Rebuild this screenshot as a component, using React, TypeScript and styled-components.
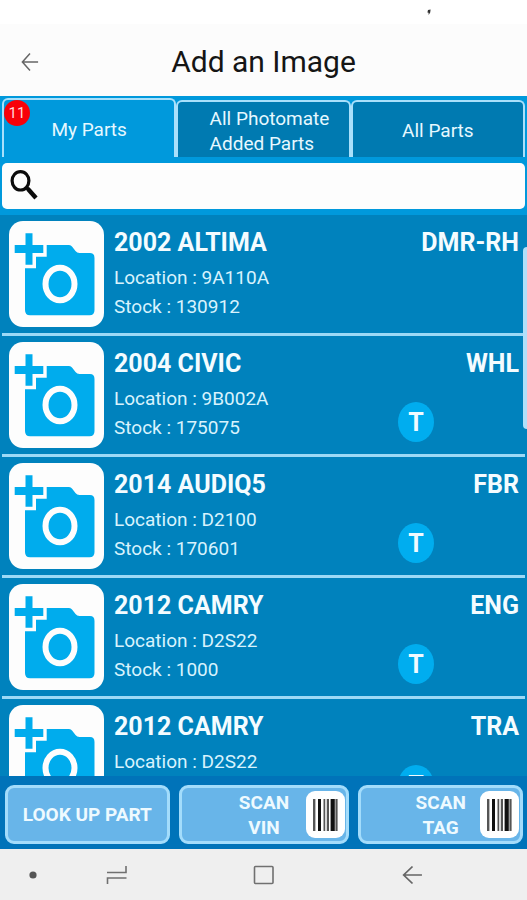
import React from "react";
import styled, { createGlobalStyle } from "styled-components";

const GlobalStyle = createGlobalStyle`
  *, *::before, *::after { box-sizing: border-box; }
  body { margin: 0; background: #fdfdfd; }
  body, button, input { font-family: Roboto, "Liberation Sans", sans-serif; }
  button { margin: 0; padding: 0; border: 0; background: none; color: inherit; cursor: pointer; }
  svg { display: block; }
`;

const line = "#a9e0fb";

const Screen = styled.div`
  display: flex;
  flex-direction: column;
  height: 100vh;
  overflow: hidden;
`;

const StatusBar = styled.div`
  display: flex;
  justify-content: flex-end;
  align-items: center;
  height: 24px;
  padding-right: 95px;
  background: #fff;
  flex: none;
`;

const Header = styled.header`
  display: grid;
  grid-template-columns: 60px 1fr 60px;
  align-items: center;
  height: 72px;
  padding-top: 3px;
  flex: none;
  background: #fcfcfc;
`;

const BackButton = styled.button`
  justify-self: center;
`;

const Title = styled.h1`
  margin: 0;
  text-align: center;
  font-size: 30px;
  line-height: 40px;
  font-weight: 400;
  color: #151515;
`;

const Main = styled.main`
  display: flex;
  flex-direction: column;
  flex: 1;
  min-height: 0;
  background: #0099dc;
`;

const Tabs = styled.div`
  display: grid;
  grid-template-columns: repeat(3, 1fr);
  align-items: end;
  height: 61px;
  padding: 0 2px;
  flex: none;
`;

const Tab = styled.button<{ $active?: boolean }>`
  position: relative;
  height: ${(p) => (p.$active ? 59 : 57)}px;
  padding-top: 2px;
  border: 2px solid ${line};
  border-bottom: 0;
  border-radius: 6px 6px 0 0;
  background: ${(p) => (p.$active ? "#0099dc" : "#007ab1")};
  color: #e6f8ff;
  font-size: 19px;
  line-height: 25px;
`;

const TwoLines = styled.span`
  display: inline-block;
  padding-left: 12px;
  text-align: left;
`;

const Badge = styled.span`
  position: absolute;
  top: 0;
  left: 0;
  width: 26px;
  height: 26px;
  border-radius: 50%;
  background: #f80008;
  color: #ffd9d9;
  font-size: 15px;
  line-height: 26px;
  text-align: center;
`;

const SearchBar = styled.label`
  display: flex;
  align-items: center;
  gap: 8px;
  height: 46px;
  margin: 6px 2px;
  padding: 0 8px 2px;
  border-radius: 5px;
  background: #fdfdfd;
  flex: none;
`;

const SearchInput = styled.input`
  flex: 1;
  min-width: 0;
  border: 0;
  outline: 0;
  background: transparent;
  font-size: 19px;
`;

const ListArea = styled.section`
  position: relative;
  flex: 1;
  min-height: 0;
  padding: 0 2px;
  overflow: hidden;
  background: #0082bd;
`;

const ScrollThumb = styled.div`
  position: absolute;
  top: 32px;
  right: 0;
  width: 4px;
  height: 182px;
  border-radius: 4px 0 0 4px;
  background: #b0e0fa;
`;

const List = styled.ul`
  margin: 0;
  padding: 0;
  list-style: none;
`;

const Row = styled.li`
  display: grid;
  grid-template-columns: 95px 1fr auto;
  column-gap: 10px;
  height: 121px;
  padding: 6px 6px 0 7px;
  border-bottom: 3px solid #9cd9f6;
`;

const PhotoButton = styled.button`
  width: 95px;
  height: 106px;
  border-radius: 14px;
  background: #fdfdfd;
  overflow: hidden;
`;

const PartTitle = styled.h2`
  margin: 7px 0 5px;
  font-size: 25px;
  line-height: 30px;
  font-weight: 700;
  color: #f4fcff;
  white-space: nowrap;
`;

const Detail = styled.p`
  margin: 0;
  font-size: 19px;
  line-height: 29px;
  color: #d8f3fd;
  white-space: nowrap;
`;

const CodeColumn = styled.div`
  display: flex;
  flex-direction: column;
  align-items: flex-end;
`;

const TagMark = styled.span`
  width: 36px;
  height: 40px;
  margin: 18px 85px 0 0;
  border-radius: 50%;
  background: #00adef;
  color: #f0fbff;
  font-size: 25px;
  line-height: 42px;
  font-weight: 700;
  text-align: center;
`;

const Actions = styled.footer`
  display: grid;
  grid-template-columns: 165fr 171fr 165fr;
  gap: 9px;
  padding: 9px 4px 5px 5px;
  background: #0073b9;
  flex: none;
`;

const ActionButton = styled.button`
  display: grid;
  grid-template-columns: 1fr auto 1fr;
  align-items: center;
  height: 59px;
  border: 3px solid #a3dcfb;
  border-radius: 9px;
  background: #68b5e9;
  color: #eefaff;
  font-size: 19px;
  line-height: 25px;
  font-weight: 700;
`;

const ActionText = styled.span`
  grid-column: 2;
  white-space: nowrap;
`;

const BarcodeTile = styled.span`
  display: grid;
  place-items: center;
  justify-self: end;
  width: 39px;
  height: 47px;
  margin-right: 1px;
  border-radius: 9px;
  background: #fff;
`;

const SystemNav = styled.nav`
  display: grid;
  grid-template-columns: 66fr 101fr 194fr 102fr 64fr;
  align-items: center;
  justify-items: center;
  height: 51px;
  background: #efefef;
  flex: none;
`;

const NavButton = styled.button`
  padding: 8px;
`;

const ArrowIcon = ({ width }: { width: number }) => (
  <svg width={width} height="20" viewBox="0 0 20 20" fill="none" stroke="#666" strokeWidth="1.7" preserveAspectRatio="none" aria-hidden="true">
    <path d="M19 10H2M10 1.5L1.6 10L10 18.5" />
  </svg>
);

const SearchIcon = () => (
  <svg width="28" height="30" viewBox="0 0 28 30" fill="none" stroke="#0b0b0b" aria-hidden="true">
    <ellipse cx="10.5" cy="10.8" rx="8.4" ry="9.2" strokeWidth="3.2" />
    <path d="M16 17.5L19 19.5" strokeWidth="3.5" />
    <path d="M18 19L26 28" strokeWidth="4.4" />
  </svg>
);

const CameraIcon = () => (
  <svg width="95" height="106" viewBox="0 0 95 106" fill="#00aced" aria-hidden="true">
    <path d="M16.5 12.3H23.5V24H34.3V32H23.5V43.7H16.5V32H5.7V24H16.5Z" />
    <path d="M37.7 24H60Q62 24 63.2 25.8L66.5 30Q68 32 70.5 32H81Q85.5 32 85.5 37V89Q85.5 94.3 80.5 94.3H21Q16 94.3 16 89V47.3H27V35.7H37.7Z" />
    <ellipse cx="51" cy="63" rx="14.5" ry="16.2" stroke="#fdfdfd" strokeWidth="6" />
  </svg>
);

const BarcodeIcon = () => (
  <svg width="25" height="32" viewBox="0 0 25 32" aria-hidden="true">
    <path fill="#555" d="M0 0H2.4V32H0ZM10.5 0H12V32H10.5ZM14 0H16V32H14ZM23 0H24.6V32H23Z" />
    <path fill="#111" d="M5 0H8V32H5ZM17.6 0H21.8V32H17.6Z" />
    <path fill="#999" d="M12.6 0H13.4V32H12.6ZM22 0H23V32H22Z" />
  </svg>
);

const parts = [
  { name: "2002 ALTIMA", location: "9A110A", stock: "130912", code: "DMR-RH", tagged: false },
  { name: "2004 CIVIC", location: "9B002A", stock: "175075", code: "WHL", tagged: true },
  { name: "2014 AUDIQ5", location: "D2100", stock: "170601", code: "FBR", tagged: true },
  { name: "2012 CAMRY", location: "D2S22", stock: "1000", code: "ENG", tagged: true },
  { name: "2012 CAMRY", location: "D2S22", stock: "", code: "TRA", tagged: true },
];

export default function App() {
  return (
    <Screen>
      <GlobalStyle />
      <StatusBar>
        <svg width="6" height="8" viewBox="0 0 6 8" aria-hidden="true">
          <path d="M2 2L4.6 1.4L4.2 4.6L2.6 7L2.6 4.8L1.4 4.4Z" fill="#333" />
        </svg>
      </StatusBar>
      <Header>
        <BackButton aria-label="Back">
          <ArrowIcon width={18} />
        </BackButton>
        <Title>Add an Image</Title>
      </Header>
      <Main>
        <Tabs role="tablist">
          <Tab $active role="tab" aria-selected="true">
            <Badge>11</Badge>
            My Parts
          </Tab>
          <Tab role="tab" aria-selected="false">
            <TwoLines>
              All Photomate
              <br />
              Added Parts
            </TwoLines>
          </Tab>
          <Tab role="tab" aria-selected="false">All Parts</Tab>
        </Tabs>
        <SearchBar>
          <SearchIcon />
          <SearchInput type="search" aria-label="Search parts" />
        </SearchBar>
        <ListArea>
          <List>
            {parts.map((part, i) => (
              <Row key={i}>
                <PhotoButton aria-label={`Add photo to ${part.name}`}>
                  <CameraIcon />
                </PhotoButton>
                <div>
                  <PartTitle>{part.name}</PartTitle>
                  <Detail>Location : {part.location}</Detail>
                  {part.stock && <Detail>Stock : {part.stock}</Detail>}
                </div>
                <CodeColumn>
                  <PartTitle as="strong">{part.code}</PartTitle>
                  {part.tagged && <TagMark>T</TagMark>}
                </CodeColumn>
              </Row>
            ))}
          </List>
          <ScrollThumb />
        </ListArea>
        <Actions>
          <ActionButton>
            <ActionText>LOOK UP PART</ActionText>
          </ActionButton>
          {["VIN", "TAG"].map((kind) => (
            <ActionButton key={kind}>
              <ActionText>
                SCAN
                <br />
                {kind}
              </ActionText>
              <BarcodeTile>
                <BarcodeIcon />
              </BarcodeTile>
            </ActionButton>
          ))}
        </Actions>
      </Main>
      <SystemNav>
        <NavButton aria-label="Toggle navigation bar">
          <svg width="8" height="8" viewBox="0 0 8 8" aria-hidden="true">
            <circle cx="4" cy="4" r="3.6" fill="#555" />
          </svg>
        </NavButton>
        <NavButton aria-label="Recent apps">
          <svg width="22" height="20" viewBox="0 0 22 20" fill="none" stroke="#707070" strokeWidth="1.6" aria-hidden="true">
            <path d="M1 7.5H20V1M1.5 19V13H20.5" />
          </svg>
        </NavButton>
        <NavButton aria-label="Home">
          <svg width="22" height="20" viewBox="0 0 22 20" fill="none" stroke="#707070" strokeWidth="1.6" aria-hidden="true">
            <rect x="1.5" y="1.5" width="18.5" height="17" rx="1" />
          </svg>
        </NavButton>
        <NavButton aria-label="Back">
          <ArrowIcon width={21} />
        </NavButton>
      </SystemNav>
    </Screen>
  );
}
